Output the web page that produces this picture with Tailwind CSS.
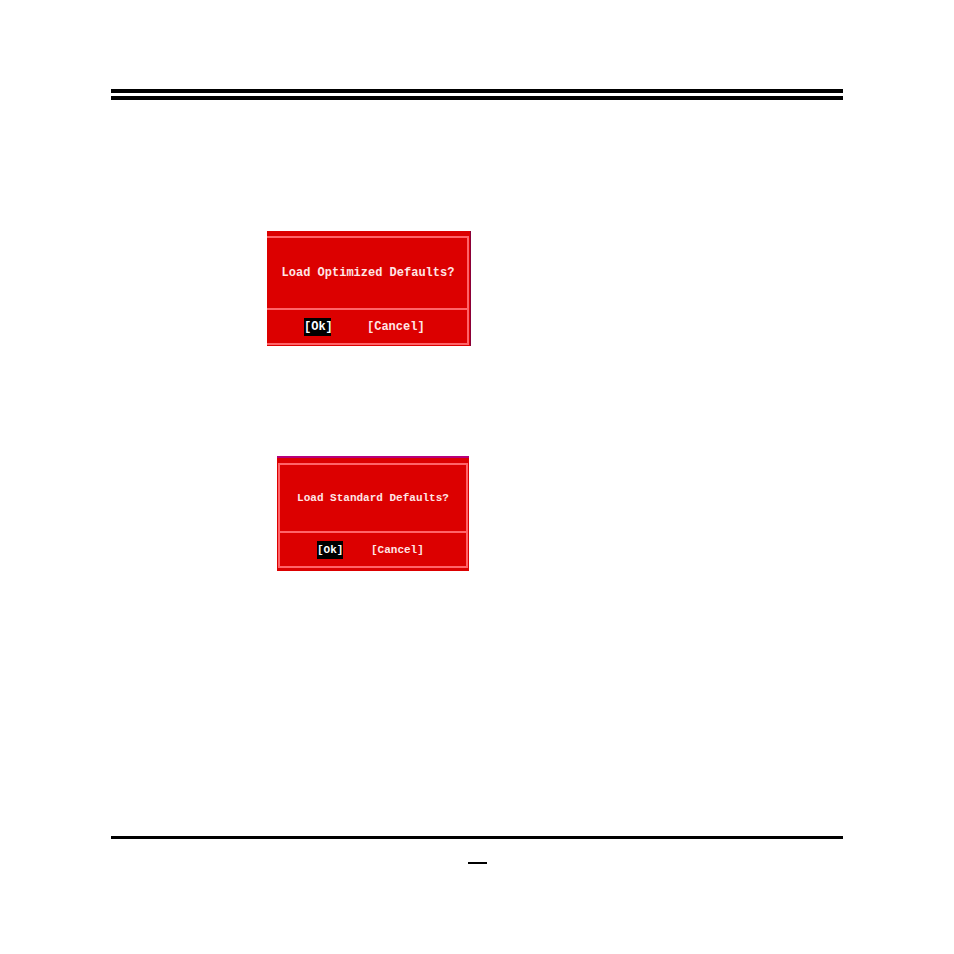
<!DOCTYPE html>
<html lang="en">
<head>
<meta charset="utf-8">
<meta name="viewport" content="width=device-width, initial-scale=1">
<title>Load Defaults</title>
<script src="https://cdn.jsdelivr.net/npm/@tailwindcss/browser@4"></script>
</head>
<body class="bg-white">
<div class="flex min-h-screen flex-col px-[111px] pt-[89px] pb-[90px]">
  <header class="flex flex-col gap-[3px]">
    <hr class="h-1 border-0 bg-black">
    <hr class="h-1 border-0 bg-black">
  </header>

  <main class="flex flex-1 flex-col items-start pt-[131px] font-['Liberation_Mono',monospace] font-bold text-[#ffe6e6]">
    <!-- Optimized defaults dialog, open on its left side -->
    <section role="dialog" aria-labelledby="optimized" class="ml-[156px] w-[204px] border-r border-[#8a0038] bg-[#dc0000] pt-[5px] pr-px">
      <div class="border-y-2 border-r-2 border-[#ff6468]">
        <h2 id="optimized" class="flex h-[70px] items-center justify-center pl-[2px] text-[12px] leading-4 whitespace-nowrap">Load Optimized Defaults?</h2>
        <div class="flex h-[35px] items-center gap-9 border-t-2 border-[#ff6468] pl-[37px] text-[12px] leading-[18px]">
          <button class="w-[27px] bg-black text-center text-white">[Ok]</button>
          <button>[Cancel]</button>
        </div>
      </div>
      <div class="h-px"></div>
    </section>

    <!-- Standard defaults dialog, framed on all sides -->
    <section role="dialog" aria-labelledby="standard" class="mt-[110px] ml-[166px] w-[192px] border-t-2 border-[#b5007c] bg-[#dc0000] px-px pt-[5px] pb-[3px]">
      <div class="border-2 border-[#ff6468]">
        <h2 id="standard" class="flex h-[66px] items-center justify-center text-[11px] leading-4 whitespace-nowrap">Load Standard Defaults?</h2>
        <div class="flex h-[35px] items-center gap-7 border-t-2 border-[#ff6468] pl-[37px] text-[11px] leading-[18px]">
          <button class="w-[26px] bg-black text-center text-white">[Ok]</button>
          <button>[Cancel]</button>
        </div>
      </div>
    </section>
  </main>

  <footer class="flex flex-col items-center gap-[23px]">
    <hr class="h-[3px] w-full border-0 bg-black">
    <hr class="h-[2px] w-[19px] border-0 bg-black">
  </footer>
</div>
</body>
</html>
